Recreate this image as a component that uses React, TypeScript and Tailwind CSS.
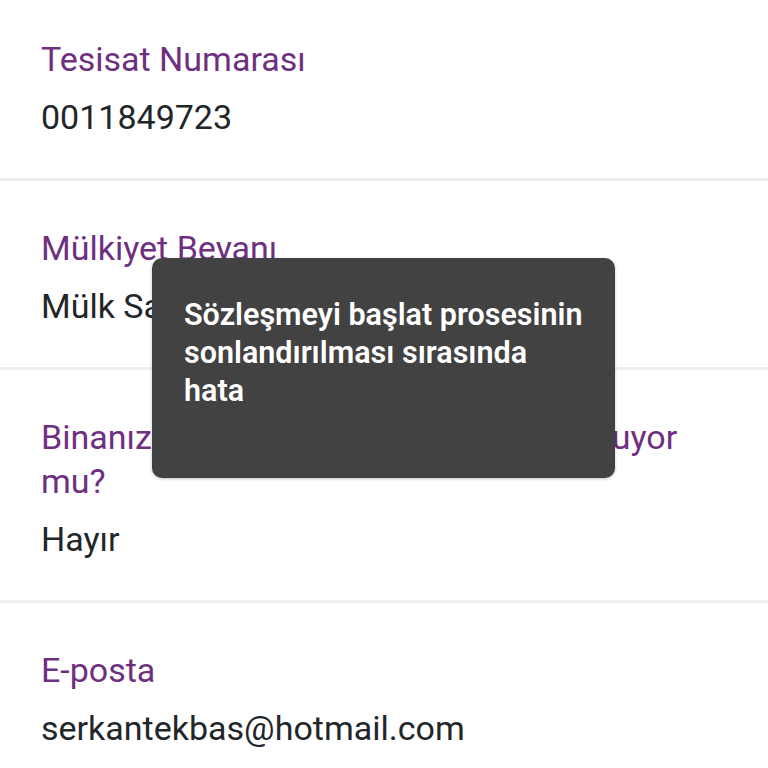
const sections = [
  { label: "Tesisat Numarası", value: "0011849723" },
  { label: "Mülkiyet Beyanı", value: "Mülk Sahibi" },
  { label: "Binanızda doğalgaz ana tesisatı bulunuyor mu?", value: "Hayır" },
  { label: "E-posta", value: "serkantekbas@hotmail.com" },
];

export default function App() {
  return (
    <div className="relative h-[768px] w-[768px] overflow-hidden bg-white font-['Roboto',sans-serif]">
      <div className="flex flex-col">
        {sections.map((s, i) => (
          <div key={i} className="flex flex-col">
            <div className={`flex flex-col gap-[14px] px-[41px] pb-[39px] ${i === 0 ? "pt-[37px]" : "pt-[45px]"}`}>
              <div className="text-[34px] leading-[44px] text-[#6f2f80]">{s.label}</div>
              <div className="text-[34px] leading-[44px] text-[#232629]">{s.value}</div>
            </div>
            <div className="h-[3px] bg-[#eeeeee]" />
          </div>
        ))}
      </div>
      <div className="absolute left-[152px] top-[258px] h-[220px] w-[463px] rounded-[10px] bg-[#424242] pl-[32px] pt-[38px] shadow-[0_1px_3px_rgba(0,0,0,0.25)]">
        <p className="w-[402px] text-[30.5px] font-semibold leading-[38px] text-white">
          Sözleşmeyi başlat prosesinin sonlandırılması sırasında hata
        </p>
      </div>
    </div>
  );
}
